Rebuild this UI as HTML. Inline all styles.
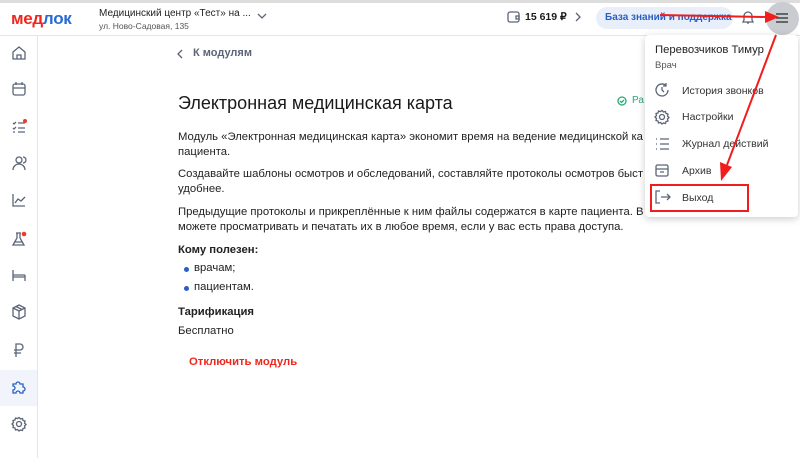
<!DOCTYPE html><html><head><meta charset="utf-8"><style>
*{margin:0;padding:0;box-sizing:border-box}
body{width:800px;height:458px;overflow:hidden;background:#fff;font-family:"Liberation Sans",sans-serif;color:#1a1a1a;position:relative}
.a{position:absolute;white-space:nowrap}
.p{font-size:11.3px;color:#222}
.b{font-weight:bold}
.m{font-size:10.5px;color:#333}
svg.i{position:absolute;fill:none;stroke:#5b6577;stroke-width:1.3}
</style></head><body>
<div class="a" style="left:0;top:0;width:800px;height:3px;background:#ddd"></div>
<div class="a" style="left:0;top:35px;width:800px;height:1px;background:#e3e6ea"></div>
<div class="a" style="left:37px;top:36px;width:1px;height:422px;background:#e3e6ea"></div>
<div class="a" style="left:11px;top:9px;font-size:17px;font-weight:bold;letter-spacing:-0.3px"><span style="color:#f0261d">мед</span><span style="color:#2a6ad6">лок</span></div>
<div class="a" style="left:99px;top:8px;font-size:10px;color:#222">Медицинский центр «Тест» на ...</div>
<div class="a" style="left:99px;top:21px;font-size:8.5px;color:#555">ул. Ново-Садовая, 135</div>
<svg class="i" style="left:256px;top:12px" width="12" height="8"><path d="M2 2l4 4 4-4"/></svg>
<svg class="i" style="left:507px;top:10px" width="14" height="14"><rect x="1" y="2" width="11" height="10" rx="2"/><path d="M9 6h3v3H9z"/></svg>
<div class="a b" style="left:525px;top:11px;font-size:10.5px">15 619 ₽</div>
<svg class="i" style="left:574px;top:12px" width="8" height="10"><path d="M2 1l4 4-4 4"/></svg>
<div class="a" style="left:596px;top:7px;width:137px;height:22px;border-radius:11px;background:#e9effa"></div>
<div class="a b" style="left:605px;top:12px;font-size:10px;color:#2a5fc2">База знаний и поддержка</div>
<svg class="i" style="left:741px;top:9px" width="14" height="16"><path d="M3 11V7a4 4 0 018 0v4l1 2H2z M6 14h2"/></svg>
<div class="a" style="left:766px;top:2px;width:33px;height:33px;border-radius:50%;background:#c9ccd1"></div>
<svg class="i" style="left:775px;top:12px;stroke:#444;stroke-width:1.5" width="14" height="12"><path d="M1 2h12M1 6h12M1 10h12"/></svg>
<div class="a" style="left:0;top:370px;width:37px;height:36px;background:#f1f4fa"></div>
<svg class="i" style="left:11px;top:45px" width="16" height="16"><path d="M2 7l6-5 6 5v7H2z M6 14v-4h4v4"/></svg>
<svg class="i" style="left:11px;top:81px" width="16" height="16"><rect x="2" y="3" width="12" height="11" rx="2"/><path d="M2 7h12M5 1v3M11 1v3"/></svg>
<svg class="i" style="left:11px;top:119px" width="16" height="16"><path d="M2 4l1 1 2-2M2 9l1 1 2-2M2 13h2M7 4h7M7 9h7M7 13h7"/><circle cx="14" cy="2" r="2" fill="#f0392b" stroke="none"/></svg>
<svg class="i" style="left:11px;top:155px" width="16" height="16"><circle cx="8" cy="5" r="3"/><path d="M2 15a6 6 0 0112 0M12 2a3 3 0 010 6"/></svg>
<svg class="i" style="left:11px;top:192px" width="16" height="16"><path d="M2 2v12h12M4 11l3-4 3 2 4-4"/></svg>
<svg class="i" style="left:11px;top:231px" width="16" height="16"><path d="M5 2h5M6 2v5l-4 7h11l-4-7V2M4 11h7"/><circle cx="13" cy="3" r="2.3" fill="#f0392b" stroke="none"/></svg>
<svg class="i" style="left:11px;top:267px" width="16" height="16"><path d="M2 3v11M14 8v6M2 10h12M2 8h12"/></svg>
<svg class="i" style="left:11px;top:304px" width="16" height="16"><path d="M8 1l6 3v8l-6 3-6-3V4zM2 4l6 3 6-3M8 7v8M5 2.5l6 3"/></svg>
<svg class="i" style="left:11px;top:342px" width="16" height="16"><path d="M5 15V2h4a3 3 0 010 6H3M3 11h7"/></svg>
<svg class="i" style="left:11px;top:378px;stroke:#2a5fc2" width="16" height="16"><path d="M3 6h2a2 2 0 014 0h3v3a2 2 0 010 4v2H9a2 2 0 00-4 0H2v-3a2 2 0 000-4V6z"/></svg>
<svg class="i" style="left:11px;top:416px" width="16" height="16"><circle cx="8" cy="8" r="2.5"/><path d="M8 1.5l1.5 1.5 2-.5.5 2 2 .5-.5 2 1.5 1.5-1.5 1.5.5 2-2 .5-.5 2-2-.5L8 15l-1.5-1.5-2 .5-.5-2-2-.5.5-2L1 8l1.5-1.5-.5-2 2-.5.5-2 2 .5z"/></svg>
<svg class="i" style="left:176px;top:49px" width="8" height="10"><path d="M6 1L2 5l4 4"/></svg>
<div class="a b" style="left:193px;top:47px;font-size:11px;color:#5b6577">К модулям</div>
<div class="a" style="left:178px;top:93px;font-size:18px;color:#1a1a1a">Электронная медицинская карта</div>
<svg class="i" style="left:617px;top:96px;stroke:#2aa876" width="10" height="10"><circle cx="5" cy="5" r="4"/><path d="M3 5l1.5 1.5L7 4"/></svg>
<div class="a" style="left:632px;top:95px;font-size:10px;color:#2aa876">Ра</div>
<div class="a p" style="left:178px;top:131px">Модуль «Электронная медицинская карта» экономит время на ведение медицинской ка</div>
<div class="a p" style="left:178px;top:146px">пациента.</div>
<div class="a p" style="left:178px;top:168px">Создавайте шаблоны осмотров и обследований, составляйте протоколы осмотров быст</div>
<div class="a p" style="left:178px;top:183px">удобнее.</div>
<div class="a p" style="left:178px;top:206px">Предыдущие протоколы и прикреплённые к ним файлы содержатся в карте пациента. В</div>
<div class="a p" style="left:178px;top:221px">можете просматривать и печатать их в любое время, если у вас есть права доступа.</div>
<div class="a p b" style="left:178px;top:244px">Кому полезен:</div>
<div class="a" style="left:184px;top:267px;width:5px;height:5px;border-radius:50%;background:#2a5fc2"></div>
<div class="a p" style="left:194px;top:262px">врачам;</div>
<div class="a" style="left:184px;top:286px;width:5px;height:5px;border-radius:50%;background:#2a5fc2"></div>
<div class="a p" style="left:194px;top:281px">пациентам.</div>
<div class="a p b" style="left:178px;top:306px">Тарификация</div>
<div class="a p" style="left:178px;top:325px">Бесплатно</div>
<div class="a b" style="left:189px;top:356px;font-size:11.3px;color:#f0261d">Отключить модуль</div>
<div class="a" style="left:645px;top:35px;width:153px;height:182px;background:#fff;border-radius:4px;box-shadow:0 2px 8px rgba(0,0,0,.2)"></div>
<div class="a" style="left:655px;top:44px;font-size:11.3px;color:#222">Перевозчиков Тимур</div>
<div class="a" style="left:655px;top:60px;font-size:9.5px;color:#555">Врач</div>
<svg class="i" style="left:654px;top:82px" width="16" height="16"><path d="M14 8a6 6 0 11-2-4.5M12 1v3h-3M8 5v3l2 2"/></svg>
<div class="a m" style="left:682px;top:85px">История звонков</div>
<svg class="i" style="left:654px;top:109px" width="16" height="16"><circle cx="8" cy="8" r="2.5"/><path d="M8 1.5l1.5 1.5 2-.5.5 2 2 .5-.5 2 1.5 1.5-1.5 1.5.5 2-2 .5-.5 2-2-.5L8 15l-1.5-1.5-2 .5-.5-2-2-.5.5-2L1 8l1.5-1.5-.5-2 2-.5.5-2 2 .5z"/></svg>
<div class="a m" style="left:682px;top:111px">Настройки</div>
<svg class="i" style="left:654px;top:136px" width="16" height="16"><path d="M2 3h1M2 8h1M2 13h1M6 3h9M6 8h9M6 13h9"/></svg>
<div class="a m" style="left:682px;top:138px">Журнал действий</div>
<svg class="i" style="left:654px;top:162px" width="16" height="16"><rect x="2" y="3" width="12" height="11" rx="1.5"/><path d="M2 7h12M6 10h4"/></svg>
<div class="a m" style="left:682px;top:165px">Архив</div>
<div class="a" style="left:650px;top:184px;width:99px;height:28px;border:2px solid #f01d1d"></div>
<svg class="i" style="left:654px;top:189px" width="18" height="16"><path d="M6 2H2v12h4M7 8h9M13 5l3 3-3 3"/></svg>
<div class="a m" style="left:682px;top:192px">Выход</div>
<svg class="a" style="left:0;top:0" width="800" height="458"><g stroke="#f01d1d" stroke-width="2" fill="#f01d1d">
<line x1="660" y1="15" x2="766" y2="17"/><path d="M779 17l-14-6v12z" stroke="none"/>
<line x1="776" y1="35" x2="727" y2="165"/><path d="M721 181l-1-19 12 5z" stroke="none"/></g></svg>
</body></html>
